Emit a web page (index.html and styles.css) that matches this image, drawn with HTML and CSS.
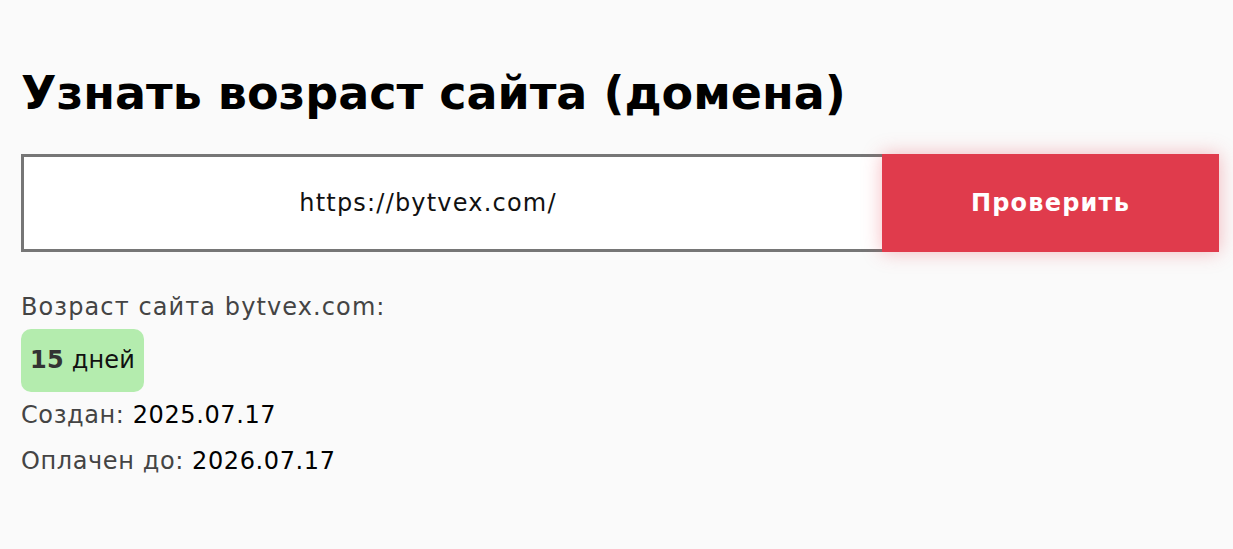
FILE: index.html
```html
<!DOCTYPE html>
<html lang="ru">
<head>
<meta charset="utf-8">
<title>Узнать возраст сайта</title>
<link rel="stylesheet" href="styles.css">
</head>
<body>
<main class="page">
  <h1 class="title">Узнать возраст сайта (домена)</h1>
  <form class="check-form">
    <div class="url-field">https://bytvex.com/</div>
    <button class="check-btn" type="button">Проверить</button>
  </form>
  <div class="result">
    <div class="result-label">Возраст сайта bytvex.com:</div>
    <div class="age-badge"><b>15</b> дней</div>
    <div class="result-row">Создан: <span class="value">2025.07.17</span></div>
    <div class="result-row">Оплачен до: <span class="value">2026.07.17</span></div>
  </div>
</main>
</body>
</html>
```

FILE: styles.css
```css
html, body {
  margin: 0;
  padding: 0;
  background: #fafafa;
}
body {
  font-family: "DejaVu Sans", "Noto Sans", sans-serif;
  color: #111;
}
.page {
  padding: 58px 14px 0 21px;
}
.title {
  margin: 0;
  font-size: 46px;
  font-weight: 700;
  line-height: 70px;
  color: #000;
}
.check-form {
  display: flex;
  margin-top: 26px;
  height: 98px;
}
.url-field {
  flex: 1;
  box-sizing: border-box;
  border: 3px solid #767676;
  border-right: none;
  background: #fff;
  display: flex;
  align-items: center;
  justify-content: center;
  padding-right: 50px;
  font-size: 24px;
  letter-spacing: 1.2px;
  color: #111;
}
.check-btn {
  width: 337px;
  border: none;
  background: #e03b4c;
  color: #fff;
  font-family: inherit;
  font-size: 24px;
  font-weight: 700;
  letter-spacing: 1.2px;
  box-shadow: 0 0 18px rgba(230, 60, 75, 0.35);
}
.result {
  margin-top: 40px;
  font-size: 24px;
  letter-spacing: 0.6px;
}
.result-label {
  color: #444;
  line-height: 30px;
  letter-spacing: 1.1px;
}
.age-badge {
  display: inline-block;
  margin-top: 7px;
  background: #b4ecae;
  border-radius: 10px;
  padding: 0 9px;
  line-height: 63px;
  font-size: 24px;
  letter-spacing: 0.2px;
  color: #111;
}
.age-badge b {
  color: #333;
}
.result-row {
  color: #444;
  line-height: 46px;
}
.result-row .value {
  color: #000;
}
```
